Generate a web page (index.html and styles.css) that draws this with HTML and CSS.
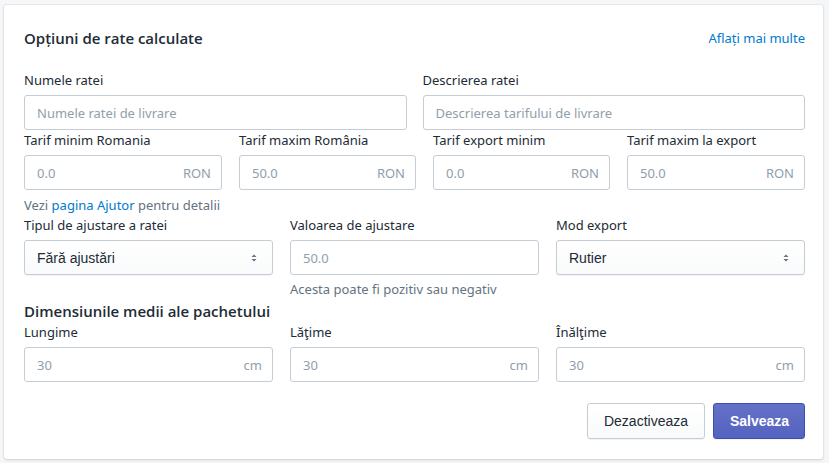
FILE: index.html
```html
<html>
    <head>
        <title>Opțiuni de rate calculate</title>
    <link rel="stylesheet" href="styles.css">
    </head>
    <body>
        <div class="card">
            <div class="card-header">
                <h2>Opțiuni de rate calculate</h2>
                <a href="#" class="link">Aflați mai multe</a>
            </div>

            <div class="row two">
                <div class="field">
                    <label>Numele ratei</label>
                    <div class="input"><span class="ph">Numele ratei de livrare</span></div>
                </div>
                <div class="field">
                    <label>Descrierea ratei</label>
                    <div class="input"><span class="ph">Descrierea tarifului de livrare</span></div>
                </div>
            </div>

            <div class="row four">
                <div class="field">
                    <label>Tarif minim Romania</label>
                    <div class="input"><span class="ph">0.0</span><span class="unit">RON</span></div>
                </div>
                <div class="field">
                    <label>Tarif maxim România</label>
                    <div class="input"><span class="ph">50.0</span><span class="unit">RON</span></div>
                </div>
                <div class="field">
                    <label>Tarif export minim</label>
                    <div class="input"><span class="ph">0.0</span><span class="unit">RON</span></div>
                </div>
                <div class="field">
                    <label>Tarif maxim la export</label>
                    <div class="input"><span class="ph">50.0</span><span class="unit">RON</span></div>
                </div>
            </div>
            <p class="help">Vezi <a href="#" class="link">pagina Ajutor</a> pentru detalii</p>

            <div class="row three">
                <div class="field">
                    <label>Tipul de ajustare a ratei</label>
                    <div class="select"><span>Fără ajustări</span>
                        <svg width="8" height="12" viewBox="0 0 8 12"><path d="M4 2.5 L6.5 5 H1.5 Z M4 9.5 L1.5 7 H6.5 Z" fill="#637381"/></svg>
                    </div>
                </div>
                <div class="field">
                    <label>Valoarea de ajustare</label>
                    <div class="input"><span class="ph">50.0</span></div>
                    <p class="note">Acesta poate fi pozitiv sau negativ</p>
                </div>
                <div class="field">
                    <label>Mod export</label>
                    <div class="select"><span>Rutier</span>
                        <svg width="8" height="12" viewBox="0 0 8 12"><path d="M4 2.5 L6.5 5 H1.5 Z M4 9.5 L1.5 7 H6.5 Z" fill="#637381"/></svg>
                    </div>
                </div>
            </div>

            <h3>Dimensiunile medii ale pachetului</h3>
            <div class="row three">
                <div class="field">
                    <label>Lungime</label>
                    <div class="input"><span class="ph">30</span><span class="unit">cm</span></div>
                </div>
                <div class="field">
                    <label>Lăţime</label>
                    <div class="input"><span class="ph">30</span><span class="unit">cm</span></div>
                </div>
                <div class="field">
                    <label>Înălţime</label>
                    <div class="input"><span class="ph">30</span><span class="unit">cm</span></div>
                </div>
            </div>

            <div class="actions">
                <button class="btn">Dezactiveaza</button>
                <button class="btn primary">Salveaza</button>
            </div>
        </div>
    </body>
</html>
```

FILE: styles.css
```css
body{
    margin:0;
    background-color:#f4f6f8;
    font-family:"Noto Sans", "Open Sans", sans-serif;
    font-size:13px;
    color:#212b36;
    padding:5px 6px 4px 4px;
}
.card{
    background-color:white;
    border-radius:3px;
    box-shadow:0 0 0 1px rgba(63,63,68,0.05), 0 1px 3px 0 rgba(63,63,68,0.15);
    padding:20px 18px 20px 20px;
}
.card-header{
    display:flex;
    justify-content:space-between;
    align-items:center;
    margin-top:1px;
    margin-bottom:20px;
}
h2{
    margin:0;
    font-family:"Open Sans", "Noto Sans", sans-serif;
    font-size:15px;
    font-weight:600;
    line-height:24px;
}
.link{
    color:#007ace;
    text-decoration:none;
}
.row{
    display:grid;
    column-gap:17px;
}
.two{
    grid-template-columns:1fr 1fr;
    column-gap:16px;
}
.four{
    grid-template-columns:198px 177px 177px 178px;
}
.three{
    grid-template-columns:1fr 1fr 1fr;
}
label{
    display:block;
    line-height:20px;
    margin-bottom:5px;
}
.input, .select{
    height:35px;
    box-sizing:border-box;
    border:1px solid #c4cdd5;
    border-radius:3px;
    display:flex;
    align-items:center;
    justify-content:space-between;
    padding:0 10px 0 12px;
}
.ph, .unit{
    color:#919eab;
}
.select{
    background:linear-gradient(#ffffff, #f9fafb);
    font-family:"Liberation Sans", Arial, sans-serif;
    font-size:14px;
    padding-right:14px;
    box-shadow:0 1px 0 rgba(22,29,37,0.05);
}
.help{
    margin:5px 0 0 0;
    line-height:20px;
    color:#637381;
}
.note{
    margin:4px 0 0 0;
    line-height:20px;
    color:#637381;
}
h3{
    margin:1px 0 0 0;
    font-family:"Open Sans", "Noto Sans", sans-serif;
    font-size:15px;
    font-weight:600;
    line-height:22px;
}
.actions{
    display:flex;
    justify-content:flex-end;
    gap:8px;
    margin-top:21px;
}
.btn{
    height:36px;
    padding:0 16px;
    border:1px solid #c4cdd5;
    border-radius:3px;
    background:linear-gradient(#ffffff, #f9fafb);
    box-shadow:0 1px 0 rgba(22,29,37,0.05);
    font-family:"Liberation Sans", Arial, sans-serif;
    font-size:14px;
    color:#212b36;
}
.primary{
    background:linear-gradient(#6371c7, #5563c1);
    border-color:#3f4eae;
    color:white;
    font-weight:bold;
    width:92px;
}
```
